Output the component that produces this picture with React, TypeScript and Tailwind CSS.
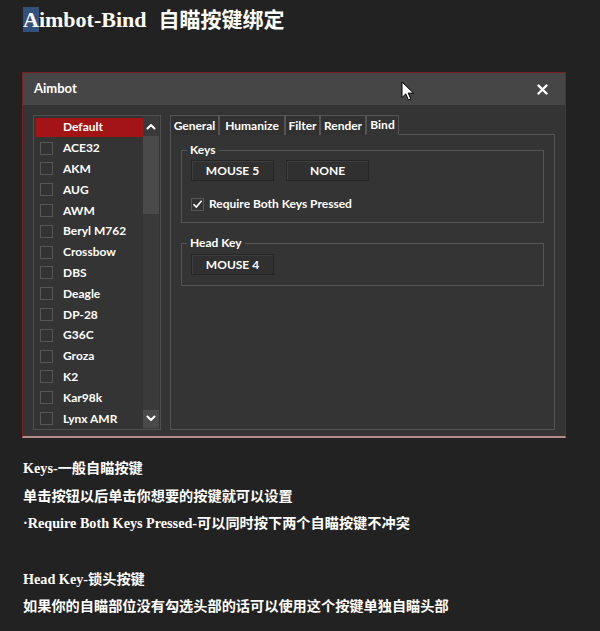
import React from "react";

const UI_FONT = "font-['Lato','Open_Sans',sans-serif]";
const DOC_FONT = "font-['Liberation_Serif','Noto_Sans_CJK_SC',serif]";

const WEAPONS = [
  "ACE32",
  "AKM",
  "AUG",
  "AWM",
  "Beryl M762",
  "Crossbow",
  "DBS",
  "Deagle",
  "DP-28",
  "G36C",
  "Groza",
  "K2",
  "Kar98k",
  "Lynx AMR",
];

const TABS = [
  { label: "General", w: "w-[49px]" },
  { label: "Humanize", w: "w-[66px]" },
  { label: "Filter", w: "w-[35px]" },
  { label: "Render", w: "w-[46px]" },
  { label: "Bind", w: "w-[33px]" },
];

function Chevron({ up }: { up?: boolean }) {
  return (
    <svg width="10" height="7" viewBox="0 0 10 7" className="block">
      <path
        d={up ? "M1.5 5.5L5 2l3.5 3.5" : "M1.5 1.5L5 5l3.5-3.5"}
        stroke="#fff"
        strokeWidth="2"
        fill="none"
        strokeLinecap="round"
        strokeLinejoin="round"
      />
    </svg>
  );
}

function Box({ checked }: { checked?: boolean }) {
  return (
    <span className="flex h-[13px] w-[13px] shrink-0 items-center justify-center border border-[#575757] bg-[#333]">
      {checked && (
        <svg width="11" height="10" viewBox="0 0 11 10" className="block">
          <path
            d="M1.5 5.2l2.8 2.8L9.6 1.8"
            stroke="#fff"
            strokeWidth="1.6"
            fill="none"
          />
        </svg>
      )}
    </span>
  );
}

function KeyButton({ children }: { children: React.ReactNode }) {
  return (
    <div className="flex h-[21px] w-[83px] items-center justify-center border border-[#262626] bg-[#303030] text-[12px] font-bold text-white shadow-[inset_1px_1px_0_#3e3e3e]">
      {children}
    </div>
  );
}

function Group({
  title,
  className,
  children,
}: {
  title: string;
  className?: string;
  children: React.ReactNode;
}) {
  return (
    <div className={`relative border border-[#555] ${className ?? ""}`}>
      <span className="absolute -top-[9px] left-[5px] bg-[#343434] px-[3px] text-[12px] leading-[16px] font-bold text-white">
        {title}
      </span>
      {children}
    </div>
  );
}

export default function App() {
  return (
    <div className="relative h-[631px] w-[600px] overflow-hidden bg-[#222]">
      {/* Heading */}
      <h1
        className={`${DOC_FONT} pt-[6px] pl-[23px] text-[22px] leading-[28px] font-bold text-white`}
      >
        <span className="bg-[#34507c]">A</span>imbot-Bind
        <span className="ml-[12px] text-[21px]">自瞄按键绑定</span>
      </h1>

      {/* Aimbot window */}
      <div
        className={`${UI_FONT} mt-[38px] ml-[22px] flex h-[366px] w-[544px] flex-col border border-b-2 border-[#7c1f22] border-b-[#b68b8b] bg-[#343434]`}
      >
        <div className="flex h-[32px] shrink-0 items-center justify-between bg-[#464646] pr-[17px] pl-[11px]">
          <span className="text-[13px] font-bold text-white">Aimbot</span>
          <svg width="11" height="11" viewBox="0 0 11 11" className="block">
            <path
              d="M1.5 1.5l8 8M9.5 1.5l-8 8"
              stroke="#fff"
              strokeWidth="2.4"
              strokeLinecap="round"
            />
          </svg>
        </div>

        <div className="flex flex-1 gap-[9px] px-[10px] pt-[10px] pb-[9px]">
          {/* Weapon list */}
          <div className="flex w-[128px] border border-[#505050]">
            <div className="flex-1 overflow-hidden pt-[1px]">
              <div className="flex h-[20.8px] items-center py-[1px] pl-[2px]">
                <div className="flex h-full w-full items-center bg-[#a31417] pl-[27px] text-[12px] font-bold text-white">
                  Default
                </div>
              </div>
              {WEAPONS.map((w) => (
                <div
                  key={w}
                  className="flex h-[20.8px] items-center gap-[10px] pl-[6px] text-[12px] font-bold text-white"
                >
                  <Box />
                  <span>{w}</span>
                </div>
              ))}
            </div>
            <div className="mr-[1px] flex w-[16px] flex-col items-center bg-[#3a3a3a]">
              <div className="flex h-[20px] items-center">
                <Chevron up />
              </div>
              <div className="h-[78px] w-full bg-[#4a4a4a]" />
              <div className="flex-1" />
              <div className="mb-[1px] flex h-[18px] w-full items-center justify-center bg-[#4a4a4a]">
                <Chevron />
              </div>
            </div>
          </div>

          {/* Settings tabs */}
          <div className="flex flex-1 flex-col">
            <div className="flex h-[20px] items-end">
              {TABS.map((t) => (
                <div
                  key={t.label}
                  className={`${t.w} flex h-[20px] items-center justify-center border border-[#555] text-[12px] font-bold text-white ${
                    t.label === "Bind"
                      ? "border-b-[#343434] bg-[#343434]"
                      : "border-b-0 bg-[#313131]"
                  }`}
                >
                  {t.label}
                </div>
              ))}
              <div className="flex-1 border-b border-[#555]" />
            </div>
            <div className="-mt-[1px] flex-1 border border-t-0 border-[#555] px-[10px] pt-[16px]">
              <Group title="Keys" className="h-[73px]">
                <div className="flex gap-[12px] pt-[9px] pl-[9px]">
                  <KeyButton>MOUSE 5</KeyButton>
                  <KeyButton>NONE</KeyButton>
                </div>
                <div className="mt-[14px] flex items-center gap-[5px] pl-[9px] text-[12px] font-bold text-white">
                  <Box checked />
                  <span>Require Both Keys Pressed</span>
                </div>
              </Group>
              <Group title="Head Key" className="mt-[20px] h-[43px]">
                <div className="pt-[10px] pl-[9px]">
                  <KeyButton>MOUSE 4</KeyButton>
                </div>
              </Group>
            </div>
          </div>
        </div>
      </div>

      {/* Mouse pointer over the title bar */}
      <svg
        width="13"
        height="20"
        viewBox="0 0 13 20"
        className="absolute top-[81px] left-[401px]"
      >
        <path
          d="M1 1v15.5l3.8-3.6 2.6 6 2.4-1-2.6-5.8H12.5z"
          fill="#fff"
          stroke="#000"
          strokeWidth="1"
          strokeLinejoin="round"
        />
      </svg>

      {/* Notes */}
      <div
        className={`${DOC_FONT} mt-[17px] pl-[23px] text-[14.2px] leading-[27.5px] font-bold text-white`}
      >
        <p>Keys-一般自瞄按键</p>
        <p>单击按钮以后单击你想要的按键就可以设置</p>
        <p>·Require Both Keys Pressed-可以同时按下两个自瞄按键不冲突</p>
        <p className="mt-[28px]">Head Key-锁头按键</p>
        <p>如果你的自瞄部位没有勾选头部的话可以使用这个按键单独自瞄头部</p>
      </div>
    </div>
  );
}
